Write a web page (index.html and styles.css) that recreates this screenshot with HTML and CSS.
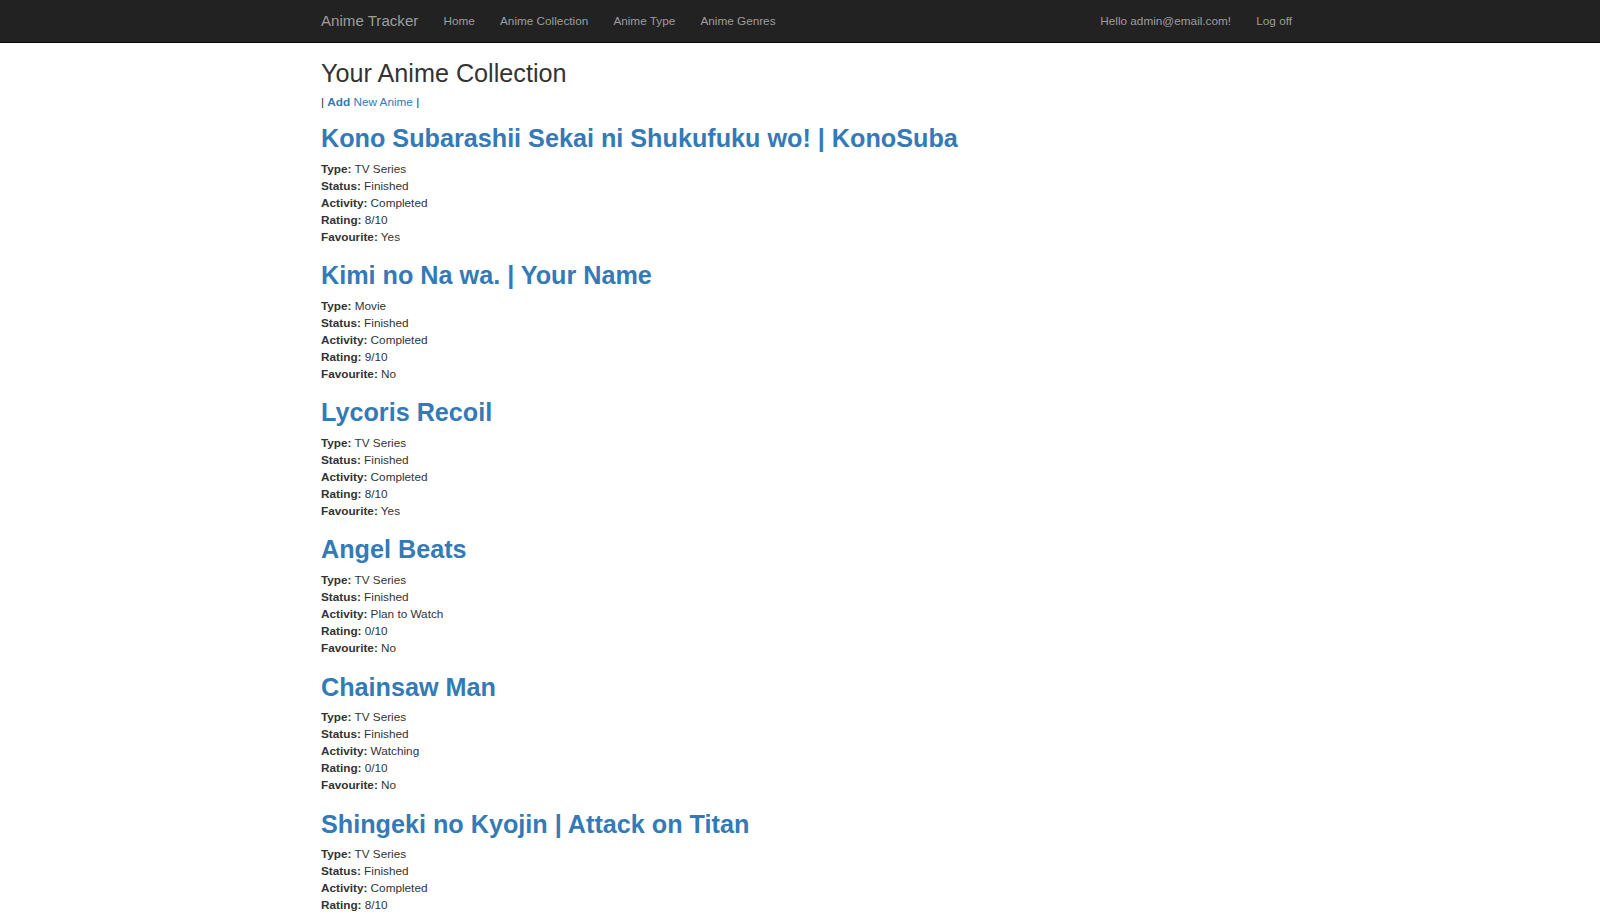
FILE: index.html
```html
<!DOCTYPE html>
<html lang="en">
<head>
<meta charset="utf-8">
<title>Your Anime Collection - Anime Tracker</title>
<link rel="stylesheet" href="styles.css">
</head>
<body>
<nav class="navbar">
  <div class="container navbar-inner">
    <a class="brand" href="#">Anime Tracker</a>
    <ul class="nav">
      <li><a href="#">Home</a></li>
      <li><a href="#">Anime Collection</a></li>
      <li><a href="#">Anime Type</a></li>
      <li><a href="#">Anime Genres</a></li>
    </ul>
    <ul class="nav nav-right">
      <li><a href="#">Hello admin@email.com!</a></li>
      <li><a href="#">Log off</a></li>
    </ul>
  </div>
</nav>
<main class="container body-content">
  <h2 class="page-title">Your Anime Collection</h2>
  <p class="actions">| <a href="#"><strong>Add</strong> New Anime</a> |</p>

  <section class="anime">
    <h2 class="anime-title"><a href="#">Kono Subarashii Sekai ni Shukufuku wo! | KonoSuba</a></h2>
    <div class="anime-details">
      <div><strong>Type:</strong> TV Series</div>
      <div><strong>Status:</strong> Finished</div>
      <div><strong>Activity:</strong> Completed</div>
      <div><strong>Rating:</strong> 8/10</div>
      <div><strong>Favourite:</strong> Yes</div>
    </div>
  </section>

  <section class="anime">
    <h2 class="anime-title"><a href="#">Kimi no Na wa. | Your Name</a></h2>
    <div class="anime-details">
      <div><strong>Type:</strong> Movie</div>
      <div><strong>Status:</strong> Finished</div>
      <div><strong>Activity:</strong> Completed</div>
      <div><strong>Rating:</strong> 9/10</div>
      <div><strong>Favourite:</strong> No</div>
    </div>
  </section>

  <section class="anime">
    <h2 class="anime-title"><a href="#">Lycoris Recoil</a></h2>
    <div class="anime-details">
      <div><strong>Type:</strong> TV Series</div>
      <div><strong>Status:</strong> Finished</div>
      <div><strong>Activity:</strong> Completed</div>
      <div><strong>Rating:</strong> 8/10</div>
      <div><strong>Favourite:</strong> Yes</div>
    </div>
  </section>

  <section class="anime">
    <h2 class="anime-title"><a href="#">Angel Beats</a></h2>
    <div class="anime-details">
      <div><strong>Type:</strong> TV Series</div>
      <div><strong>Status:</strong> Finished</div>
      <div><strong>Activity:</strong> Plan to Watch</div>
      <div><strong>Rating:</strong> 0/10</div>
      <div><strong>Favourite:</strong> No</div>
    </div>
  </section>

  <section class="anime">
    <h2 class="anime-title"><a href="#">Chainsaw Man</a></h2>
    <div class="anime-details">
      <div><strong>Type:</strong> TV Series</div>
      <div><strong>Status:</strong> Finished</div>
      <div><strong>Activity:</strong> Watching</div>
      <div><strong>Rating:</strong> 0/10</div>
      <div><strong>Favourite:</strong> No</div>
    </div>
  </section>

  <section class="anime">
    <h2 class="anime-title"><a href="#">Shingeki no Kyojin | Attack on Titan</a></h2>
    <div class="anime-details">
      <div><strong>Type:</strong> TV Series</div>
      <div><strong>Status:</strong> Finished</div>
      <div><strong>Activity:</strong> Completed</div>
      <div><strong>Rating:</strong> 8/10</div>
      <div><strong>Favourite:</strong> Yes</div>
    </div>
  </section>
</main>
</body>
</html>
```
FILE: styles.css
```css
* {
  box-sizing: border-box;
}

html, body {
  margin: 0;
  padding: 0;
  background: #fff;
}

body {
  font-family: "Liberation Sans", Arial, Helvetica, sans-serif;
  font-size: 11.76px;
  line-height: 16.8px;
  color: #333;
}

a {
  color: #337ab7;
  text-decoration: none;
}

.container {
  width: 971px;
  margin-left: 321px;
}

/* navbar */
.navbar {
  height: 43px;
  background: #222;
  border-bottom: 1px solid #080808;
}

.navbar-inner {
  display: flex;
  align-items: flex-start;
  height: 42px;
}

.brand {
  display: block;
  margin-left: -12.6px;
  padding: 12.6px 12.6px;
  height: 42px;
  font-size: 15.1px;
  line-height: 16.8px;
  color: #9d9d9d;
}

.nav {
  display: flex;
  list-style: none;
  margin: 0;
  padding: 0;
}

.nav a {
  display: block;
  padding: 12.6px 12.6px;
  line-height: 16.8px;
  color: #9d9d9d;
}

.nav-right {
  margin-left: auto;
  margin-right: -12.6px;
}

/* content */
.page-title {
  margin: 16.9px 0 6.1px;
  font-size: 25.2px;
  font-weight: 500;
  line-height: 27.7px;
  color: #333;
}

.actions {
  margin: 0 0 14.9px;
}

.anime-title {
  margin: 0 0 8px;
  font-size: 25.2px;
  font-weight: 700;
  line-height: 27.7px;
}

.anime-details {
  margin: 0 0 16.8px;
  line-height: 16.9px;
}

strong {
  font-weight: 700;
}
```
